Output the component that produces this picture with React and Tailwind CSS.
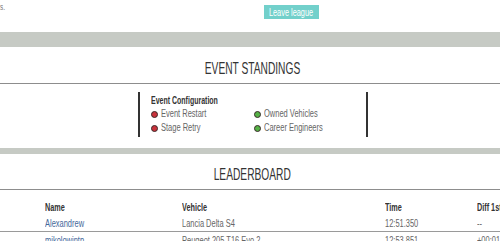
const FONT = { fontFamily: '"Liberation Sans", Arial, sans-serif' };

function N({ children, className = "" }) {
  return <span className={`inline-block whitespace-nowrap ${className}`}>{children}</span>;
}

export default function App() {
  return (
    <div className="w-[500px] h-[241px] overflow-hidden bg-white" style={FONT}>
      <div className="h-[32px] flex items-start">
        <N className="text-[9px] leading-[9px] text-[#777] mt-[3px] scale-x-[0.7] origin-left">s.</N>
        <div className="ml-[257px] mt-[5px] h-[14px] w-[55px] bg-[#72d0cb] text-white text-[11px] leading-[14px] flex justify-center overflow-hidden">
          <N className="scale-x-[0.67] origin-center">Leave league</N>
        </div>
      </div>
      <div className="h-[15px] bg-[#c6cac4]"></div>
      <div className="h-[1px] bg-white"></div>
      <div className="h-[35px] flex items-center justify-center pl-[5px]">
        <N className="text-[17px] leading-none text-[#333] mt-[5px] scale-x-[0.6] origin-center">EVENT STANDINGS</N>
      </div>
      <div className="h-[1px] bg-[#8d8d8d]"></div>
      <div className="h-[64px] pt-[8px]">
        <div className="ml-[138px] w-[230px] h-[45px] border-l-2 border-r-2 border-[#333] pl-[11px] pt-[2px]">
          <div className="text-[10px] leading-[13px] font-bold text-[#333]">
            <N className="scale-x-[0.7] origin-left">Event Configuration</N>
          </div>
          <div className="grid grid-cols-[103px_1fr] text-[10px] leading-[14px] text-[#666]">
            <Item c="#c9323b" t="Event Restart" />
            <Item c="#55b246" t="Owned Vehicles" />
            <Item c="#c9323b" t="Stage Retry" />
            <Item c="#55b246" t="Career Engineers" />
          </div>
        </div>
      </div>
      <div className="h-[6px] bg-[#c6cac4]"></div>
      <div className="h-[35px] flex items-center justify-center pl-[5px]">
        <N className="text-[17px] leading-none text-[#333] mt-[5px] scale-x-[0.6] origin-center">LEADERBOARD</N>
      </div>
      <div className="h-[1px] bg-[#8d8d8d]"></div>
      <div className="text-[11px] pt-[9px]">
        <Row bold name="Name" veh="Vehicle" time="Time" diff="Diff 1st" />
        <Row link name="Alexandrew" veh="Lancia Delta S4" time="12:51.350" diff="--" />
        <div className="h-[1px] bg-[#9a9a9a]"></div>
        <Row link name="mikolowintp" veh="Peugeot 205 T16 Evo 2" time="12:53.851" diff="+00:01.501" />
      </div>
    </div>
  );
}

function Item({ c, t }) {
  return (
    <div className="flex items-center">
      <span className="w-[7px] h-[7px] rounded-full border border-[#3a2a2a] shrink-0" style={{ backgroundColor: c }}></span>
      <N className="ml-[3px] scale-x-[0.75] origin-left">{t}</N>
    </div>
  );
}

function Row({ name, veh, time, diff, bold, link }) {
  const base = bold ? "font-bold text-[#333]" : "text-[#666]";
  const sc = bold ? "scale-x-[0.66]" : "scale-x-[0.68]";
  return (
    <div className={`flex h-[16px] leading-[16px] whitespace-nowrap ${base}`}>
      <div className={`w-[182px] shrink-0 pl-[45px] ${link ? "text-[#45689a]" : ""}`}>
        <N className={`${sc} origin-left`}>{name}</N>
      </div>
      <div className="w-[203px] shrink-0">
        <N className={`${sc} origin-left`}>{veh}</N>
      </div>
      <div className="w-[92px] shrink-0">
        <N className={`${sc} origin-left`}>{time}</N>
      </div>
      <div className="w-[80px] shrink-0">
        <N className={`${sc} origin-left`}>{diff}</N>
      </div>
    </div>
  );
}
